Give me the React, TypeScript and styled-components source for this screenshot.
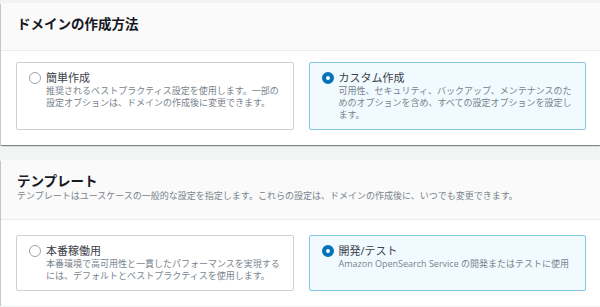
import React from 'react';
import styled, { createGlobalStyle, css } from 'styled-components';

interface ITileOption {
  label: string;
  description: string;
  selected?: boolean;
}

const creationOptions: ITileOption[] = [
  {
    label: '簡単作成',
    description:
      '推奨されるベストプラクティス設定を使用します。一部の設定オプションは、ドメインの作成後に変更できます。',
  },
  {
    label: 'カスタム作成',
    description:
      '可用性、セキュリティ、バックアップ、メンテナンスのためのオプションを含め、すべての設定オプションを設定します。',
    selected: true,
  },
];

const templateOptions: ITileOption[] = [
  {
    label: '本番稼働用',
    description:
      '本番環境で高可用性と一貫したパフォーマンスを実現するには、デフォルトとベストプラクティスを使用します。',
  },
  {
    label: '開発/テスト',
    description: 'Amazon OpenSearch Service の開発またはテストに使用',
    selected: true,
  },
];

const TileGroup = ({ options }: { options: ITileOption[] }) => (
  <TileGrid>
    {options.map((option) => (
      <Tile key={option.label} selected={!!option.selected}>
        <Radio selected={!!option.selected} />
        <TileText>
          <TileLabel>{option.label}</TileLabel>
          <TileDescription>{option.description}</TileDescription>
        </TileText>
      </Tile>
    ))}
  </TileGrid>
);

const App = () => {
  return (
    <>
      <GlobalStyle />
      <Page>
        <Panel>
          <PanelHeader>
            <Title>ドメインの作成方法</Title>
          </PanelHeader>
          <PanelBody top={11}>
            <TileGroup options={creationOptions} />
          </PanelBody>
        </Panel>
        <Panel>
          <PanelHeader>
            <Title>テンプレート</Title>
            <HeaderDescription>
              テンプレートはユースケースの一般的な設定を指定します。これらの設定は、ドメインの作成後に、いつでも変更できます。
            </HeaderDescription>
          </PanelHeader>
          <PanelBody top={15}>
            <TileGroup options={templateOptions} />
          </PanelBody>
        </Panel>
      </Page>
    </>
  );
};

export default App;

const GlobalStyle = createGlobalStyle`
  body {
    margin: 0;
    background-color: #f2f3f3;
    font-family: 'Open Sans', 'Noto Sans CJK JP', sans-serif;
    color: #16191f;
  }

  * {
    box-sizing: border-box;
  }
`;

const Page = styled.div`
  display: flex;
  flex-direction: column;
  gap: 15px;
  padding: 3px 0 0 1px;
`;

const Panel = styled.section`
  background-color: #ffffff;
  box-shadow: 0 1px 1px 0 rgba(0, 28, 36, 0.3),
    1px 1px 1px 0 rgba(0, 28, 36, 0.15), -1px 1px 1px 0 rgba(0, 28, 36, 0.15);
`;

const PanelHeader = styled.div`
  padding: 14px 16px 18px;
  background-color: #fafafa;
  border-bottom: 1px solid #eaeded;
`;

const Title = styled.h2`
  margin: 0;
  font-size: 13.5px;
  line-height: 15px;
  font-weight: 700;
  color: #16191f;
`;

const HeaderDescription = styled.div`
  margin-top: 1px;
  font-size: 9px;
  line-height: 11px;
  color: #79838c;
  white-space: nowrap;
`;

const PanelBody = styled.div<{ top: number }>`
  padding: ${({ top }) => top}px 14px 15px 15px;
`;

const TileGrid = styled.div`
  display: grid;
  grid-template-columns: 1fr 1fr;
  gap: 15px;
`;

const Tile = styled.div<{ selected: boolean }>`
  display: flex;
  align-items: flex-start;
  gap: 5px;
  padding: 8px 8px 8px 12px;
  border-radius: 2px;
  ${({ selected }) =>
    selected
      ? css`
          background-color: #f1faff;
          border: 1px solid #84c8e8;
        `
      : css`
          background-color: #ffffff;
          border: 1px solid #ccd2d4;
        `}
`;

const Radio = styled.span<{ selected: boolean }>`
  flex: none;
  width: 12px;
  height: 12px;
  margin-top: 1px;
  border-radius: 50%;
  background-color: #ffffff;
  ${({ selected }) =>
    selected
      ? css`
          border: 4px solid #0073bb;
        `
      : css`
          border: 1px solid #9aa4aa;
        `}
`;

const TileText = styled.div`
  flex: 1;
  min-width: 0;
`;

const TileLabel = styled.div`
  font-size: 11px;
  line-height: 14px;
  color: #3b4048;
`;

const TileDescription = styled.div`
  font-size: 9px;
  line-height: 12px;
  color: #79838c;
`;
